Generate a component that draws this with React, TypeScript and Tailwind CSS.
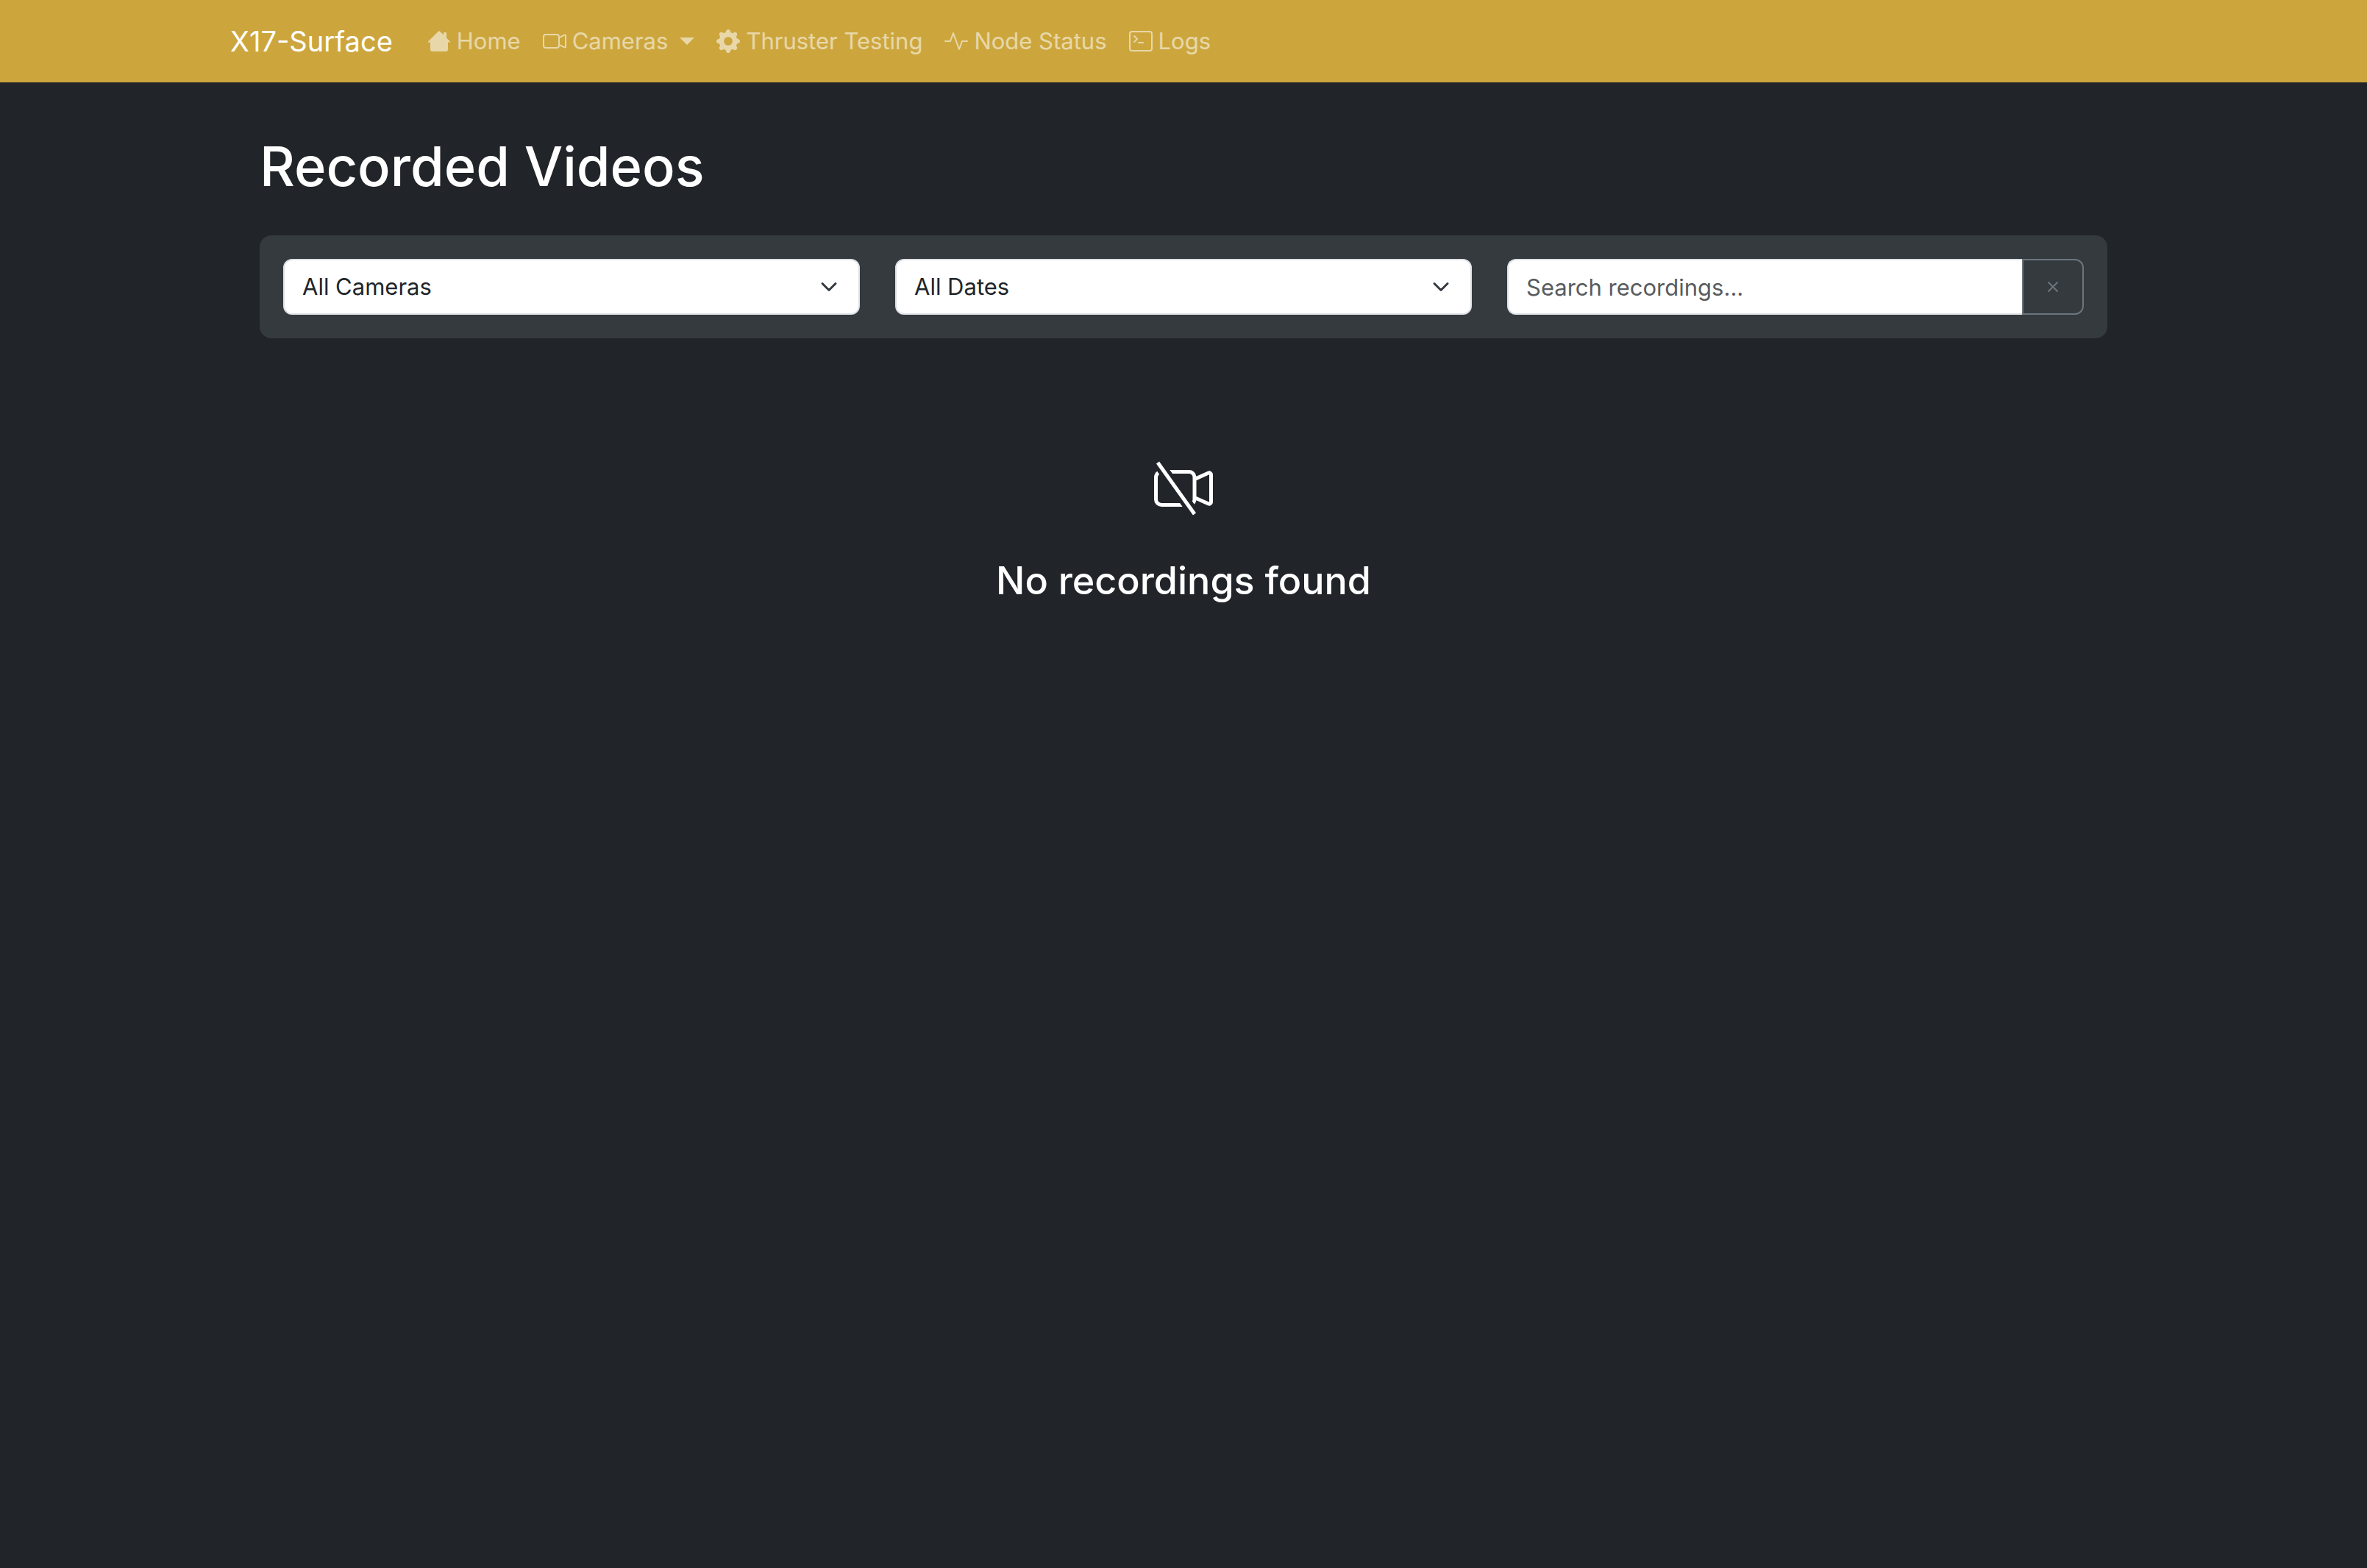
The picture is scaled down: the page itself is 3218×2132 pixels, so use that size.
import type { ReactNode } from "react";
import {
  BsActivity,
  BsCameraVideo,
  BsCameraVideoOff,
  BsChevronDown,
  BsGearFill,
  BsTerminal,
  BsX,
} from "react-icons/bs";

function HouseIcon() {
  return (
    <svg viewBox="0 0 16 16" fill="currentColor" aria-hidden="true" className="size-8">
      <path d="M8.707 1.5a1 1 0 0 0-1.414 0L.646 8.146a.5.5 0 0 0 .708.708L2 8.207V13.5A1.5 1.5 0 0 0 3.5 15h9a1.5 1.5 0 0 0 1.5-1.5V8.207l.646.647a.5.5 0 0 0 .708-.708L13 5.793V2.5a.5.5 0 0 0-.5-.5h-1a.5.5 0 0 0-.5.5v1.293z" />
    </svg>
  );
}

function NavItem({ icon, children }: { icon: ReactNode; children: ReactNode }) {
  return (
    <li>
      <a href="#" className="flex items-center gap-2 px-[15px] py-4 whitespace-nowrap">
        {icon}
        {children}
      </a>
    </li>
  );
}

function FilterSelect({ label, option }: { label: string; option: string }) {
  return (
    <div className="relative">
      <select
        aria-label={label}
        className="block h-[76px] w-full appearance-none rounded-xl border-2 border-[#dee2e6] bg-white pr-18 pl-6 text-[#212529]"
      >
        <option>{option}</option>
      </select>
      <BsChevronDown className="pointer-events-none absolute top-[26px] right-[30px] size-6 stroke-1 text-[#343a40]" />
    </div>
  );
}

export default function App() {
  return (
    <div className="min-h-screen bg-[#212529] font-[Inter,sans-serif] text-[31px] leading-[48px] text-white">
      <nav className="bg-[#cca63d]">
        <div className="mx-auto flex h-28 max-w-[2640px] items-center px-6">
          <a href="#" className="mr-8 text-[38px] leading-[60px] whitespace-nowrap">
            X17-Surface
          </a>
          <ul className="flex items-center text-white/55">
            <NavItem icon={<HouseIcon />}>Home</NavItem>
            <li>
              <button type="button" className="flex items-center gap-2 px-[15px] py-4 whitespace-nowrap">
                <BsCameraVideo className="size-8" />
                Cameras
                <span className="ml-2 border-x-[10px] border-t-[10px] border-x-transparent border-t-current" />
              </button>
            </li>
            <NavItem icon={<BsGearFill className="size-8" />}>Thruster Testing</NavItem>
            <NavItem icon={<BsActivity className="size-8" />}>Node Status</NavItem>
            <NavItem icon={<BsTerminal className="size-8" />}>Logs</NavItem>
          </ul>
        </div>
      </nav>

      <main className="mx-auto max-w-[2640px] px-16 pt-[66px]">
        <h1 className="mb-[46px] text-[74px] leading-24 font-medium">Recorded Videos</h1>

        <form className="grid grid-cols-3 gap-12 rounded-2xl bg-[#353a3e] p-8">
          <FilterSelect label="Camera" option="All Cameras" />
          <FilterSelect label="Date" option="All Dates" />
          <div className="flex">
            <input
              type="text"
              aria-label="Search recordings"
              placeholder="Search recordings..."
              className="h-[76px] min-w-0 flex-1 rounded-l-xl border-2 border-r-0 border-[#dee2e6] bg-white px-6 text-[#212529] placeholder:text-[#595c5f]"
            />
            <button
              type="button"
              aria-label="Clear search"
              className="flex h-[76px] items-center rounded-r-xl border-2 border-[#6c757d] px-6 text-[#6c757d]"
            >
              <BsX className="size-8" />
            </button>
          </div>
        </form>

        <section className="flex flex-col items-center pt-[164px]">
          <BsCameraVideoOff className="size-20" />
          <h2 className="mt-[52px] text-[52px] leading-[68px] font-medium">No recordings found</h2>
        </section>
      </main>
    </div>
  );
}
